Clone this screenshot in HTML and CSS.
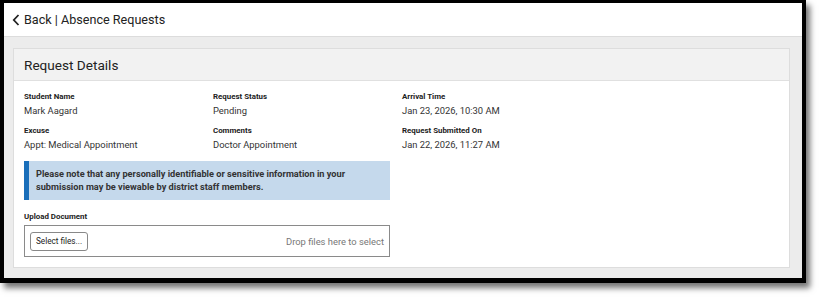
FILE: index.html
```html
<!DOCTYPE html>
<html lang="en">
<head>
    <meta charset="UTF-8">
    <title>Absence Requests</title>
    <link rel="stylesheet" href="styles.css">
</head>
<body>
    <div class="frame">
        <div class="topbar">
            <svg class="chevron" width="8" height="12" viewBox="0 0 8 12">
                <path d="M6.5 1 L1.8 6 L6.5 11" fill="none" stroke="#222" stroke-width="1.8"/>
            </svg>
            <span>Back | Absence Requests</span>
        </div>

        <div class="page">
            <div class="card">
                <div class="card-header">Request Details</div>
                <div class="card-body">
                    <div class="fields">
                        <div class="field">
                            <div class="label">Student Name</div>
                            <div class="value">Mark Aagard</div>
                        </div>
                        <div class="field">
                            <div class="label">Request Status</div>
                            <div class="value">Pending</div>
                        </div>
                        <div class="field">
                            <div class="label">Arrival Time</div>
                            <div class="value">Jan 23, 2026, 10:30 AM</div>
                        </div>
                        <div class="field">
                            <div class="label">Excuse</div>
                            <div class="value">Appt: Medical Appointment</div>
                        </div>
                        <div class="field">
                            <div class="label">Comments</div>
                            <div class="value">Doctor Appointment</div>
                        </div>
                        <div class="field">
                            <div class="label">Request Submitted On</div>
                            <div class="value">Jan 22, 2026, 11:27 AM</div>
                        </div>
                    </div>

                    <div class="notice">
                        Please note that any personally identifiable or sensitive information in your submission may be viewable by district staff members.
                    </div>

                    <div class="label upload-label">Upload Document</div>
                    <div class="dropzone">
                        <button class="select-btn">Select files...</button>
                        <span class="drop-hint">Drop files here to select</span>
                    </div>
                </div>
            </div>
        </div>
    </div>
</body>
</html>
```

FILE: styles.css
```css
* { margin: 0; padding: 0; box-sizing: border-box; }

body {
    font-family: Roboto, 'Liberation Sans', Arial, sans-serif;
    background: #ffffff;
    color: #222222;
    width: 821px;
    height: 299px;
    overflow: hidden;
}

.frame {
    width: 806px;
    height: 283px;
    border-style: solid;
    border-color: #000000;
    border-width: 3px 4px 5px 4px;
    background: #ececec;
    box-shadow: 4px 5px 6px rgba(0, 0, 0, 0.55);
    display: flex;
    flex-direction: column;
}

.topbar {
    height: 34px;
    background: #ffffff;
    border-bottom: 1px solid #dcdcdc;
    display: flex;
    align-items: center;
    padding-left: 8px;
    font-size: 12.6px;
    color: #222222;
}

.chevron {
    margin-right: 4px;
}

.page {
    flex: 1;
    padding: 11px 12px 10px 9px;
}

.card {
    height: 100%;
    background: #ffffff;
    border: 1px solid #dddddd;
}

.card-header {
    height: 32px;
    background: #f2f2f2;
    border-bottom: 1px solid #e0e0e0;
    padding-left: 10px;
    display: flex;
    align-items: center;
    font-size: 13.6px;
    color: #222222;
}

.card-body {
    padding: 10px 10px 0 10px;
}

.fields {
    display: grid;
    grid-template-columns: 189px 189px 1fr;
    row-gap: 7px;
}

.label {
    font-size: 7.9px;
    font-weight: 700;
    line-height: 12px;
    color: #222222;
}

.value {
    font-size: 9.4px;
    line-height: 14px;
    margin-top: 1px;
    color: #333333;
}

.notice {
    width: 366px;
    margin-top: 9px;
    background: #c5d9ec;
    border-left: 5px solid #1a6fba;
    padding: 6px 10px 7px 7px;
    font-size: 9.2px;
    font-weight: 700;
    line-height: 13px;
    color: #333333;
}

.upload-label {
    margin-top: 11px;
}

.dropzone {
    width: 366px;
    height: 32px;
    margin-top: 2px;
    border: 1px solid #8a8a8a;
    display: flex;
    align-items: center;
    justify-content: space-between;
    padding: 0 5px;
}

.select-btn {
    width: 58px;
    height: 19px;
    font-family: inherit;
    font-size: 8.2px;
    color: #222222;
    background: #ffffff;
    border: 1px solid #888888;
    border-radius: 3px;
}

.drop-hint {
    font-size: 9.4px;
    color: #777777;
}
```
